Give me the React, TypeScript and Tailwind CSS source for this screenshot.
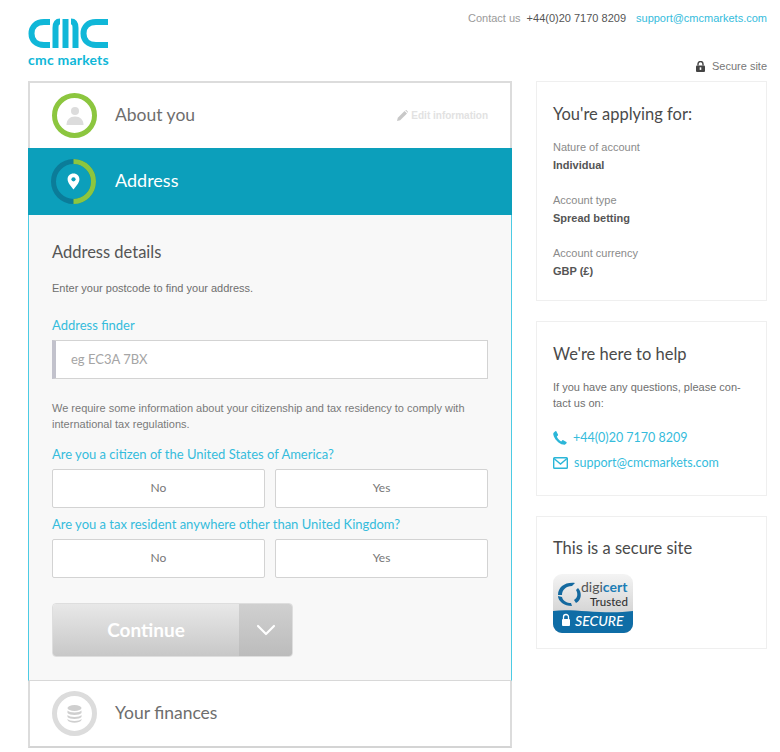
import React from 'react';
import { ChevronDown } from 'lucide-react';

const heading = "font-['Lato',sans-serif]";
const body = "font-['Liberation_Sans',Arial,sans-serif]";

const CmcLogo = () => (
  <div className="flex w-[81px] flex-col items-center">
    <svg width="81" height="31" viewBox="0 0 81 31" fill="none" stroke="#10b7d8" strokeWidth="6">
      <path d="M22 4 H16 C8 4 3.5 9 3.5 15.5 C3.5 22 8 27 16 27 H22" />
      <path d="M27.5 30 V10 C27.5 5 29 3.5 32 3.5" />
      <path d="M37.5 30 V1" />
      <path d="M47.5 30 V10 C47.5 5 46 3.5 43 3.5" />
      <path d="M80 4 H68 C60 4 55.5 9 55.5 15.5 C55.5 22 60 27 68 27 H80" />
    </svg>
    <span className={`${heading} mt-[2px] text-[14px] leading-[17px] font-bold tracking-[0.2px] whitespace-nowrap text-[#10b7d8]`}>
      cmc markets
    </span>
  </div>
);

const StepRing = ({ children, className }: { children: React.ReactNode; className: string }) => (
  <div className={`flex h-[45px] w-[45px] items-center justify-center rounded-full border-[5px] bg-white ${className}`}>
    {children}
  </div>
);

const AddressRing = () => (
  <svg width="45" height="45" viewBox="0 0 45 45" fill="none">
    <circle cx="22.5" cy="22.5" r="20" stroke="#0b7c99" strokeWidth="5" />
    <path d="M22.5 2.5 A20 20 0 0 1 22.5 42.5" stroke="#8cc63f" strokeWidth="5" />
    <path d="M22.5 14.5 C18.8 14.5 16.6 17.2 16.6 20.2 C16.6 24 20.5 27.6 22.5 30.5 C24.5 27.6 28.4 24 28.4 20.2 C28.4 17.2 26.2 14.5 22.5 14.5 Z" fill="#fff" />
    <circle cx="22.5" cy="20.3" r="2.1" fill="#0c9fbb" />
  </svg>
);

const PersonIcon = () => (
  <svg width="20" height="20" viewBox="0 0 20 20" fill="#dcdcdc">
    <circle cx="10" cy="5" r="4" />
    <path d="M1.5 19 C1.5 13.5 5 10.5 10 10.5 C15 10.5 18.5 13.5 18.5 19 Z" />
  </svg>
);

const CoinsIcon = () => (
  <svg width="15" height="18" viewBox="0 0 15 18" fill="#cfcfcf">
    <ellipse cx="7.5" cy="3" rx="7" ry="3" />
    <path d="M0.5 5.5 C2 8 13 8 14.5 5.5 V8 C13 10.5 2 10.5 0.5 8 Z" />
    <path d="M0.5 10 C2 12.5 13 12.5 14.5 10 V12 C13 14.5 2 14.5 0.5 12 Z" />
    <path d="M0.5 14 C2 16.5 13 16.5 14.5 14 V15 C13 18.5 2 18.5 0.5 15 Z" />
  </svg>
);

const PencilIcon = () => (
  <svg width="11" height="11" viewBox="0 0 11 11" fill="#c8c8c8">
    <path d="M0 11 L0.8 7.8 L7.6 1 L10 3.4 L3.2 10.2 Z" />
    <path d="M8.3 0.3 C8.7 -0.1 9.2 -0.1 9.6 0.3 L10.7 1.4 C11.1 1.8 11.1 2.3 10.7 2.7 Z" />
  </svg>
);

const PadlockIcon = () => (
  <svg width="9" height="11" viewBox="0 0 9 11">
    <path d="M2 4.5 V3 A2.5 2.5 0 0 1 7 3 V4.5" fill="none" stroke="#444" strokeWidth="1.4" />
    <rect y="4.5" width="9" height="6.5" rx="1" fill="#444" />
    <rect x="3.7" y="6.3" width="1.6" height="2.6" fill="#fff" />
  </svg>
);

const PhoneIcon = () => (
  <svg width="14" height="14" viewBox="0 0 14 14" fill="#2bb6d8">
    <path d="M3.4 0.4 L5 3.6 C5.2 4 5 4.4 4.7 4.7 L3.8 5.5 C4.6 7.4 6.2 9.3 8.2 10.4 L9.2 9.4 C9.5 9.1 9.9 9 10.3 9.2 L13.4 10.9 C13.8 11.1 13.8 11.5 13.6 11.9 C12.9 13.2 11.6 13.9 10.2 13.6 C5.5 12.6 1.2 7.8 0.3 3.4 C0 2 0.9 1 2.4 0.2 C2.8 0 3.2 0 3.4 0.4 Z" />
  </svg>
);

const EnvelopeIcon = () => (
  <svg width="15" height="12" viewBox="0 0 15 12" fill="none" stroke="#2bb6d8" strokeWidth="1.4">
    <rect x="0.7" y="0.7" width="13.6" height="10.6" rx="0.8" />
    <path d="M1 1.5 L7.5 7 L14 1.5" />
  </svg>
);

const Choice = ({ label }: { label: string }) => (
  <button className={`${heading} h-[39px] flex-1 rounded-[2px] border border-[#d3d3d3] bg-white pb-[2px] text-[12px] text-[#777]`}>{label}</button>
);

const Question = ({ text }: { text: string }) => (
  <div>
    <p className={`${heading} text-[13px] leading-[18px] text-[#35bcdc]`}>{text}</p>
    <div className="mt-[6px] flex gap-[10px]">
      <Choice label="No" />
      <Choice label="Yes" />
    </div>
  </div>
);

const Card = ({ title, className, children }: { title: string; className: string; children: React.ReactNode }) => (
  <div className={`border border-[#efefef] bg-white px-4 ${className}`}>
    <h3 className={`${heading} text-[16.5px] leading-[22px] text-[#4a4a4a]`}>{title}</h3>
    {children}
  </div>
);

const Fact = ({ label, value }: { label: string; value: string }) => (
  <div className={`${body} text-[11px] leading-[18px]`}>
    <p className="text-[#8a8a8a]">{label}</p>
    <p className="font-bold text-[#555]">{value}</p>
  </div>
);

const DigicertBadge = () => (
  <svg width="80" height="59" viewBox="0 0 80 59">
    <defs>
      <linearGradient id="badge" x1="0" y1="0" x2="0" y2="1">
        <stop offset="0" stopColor="#f4f4f4" />
        <stop offset="1" stopColor="#c4c4c4" />
      </linearGradient>
    </defs>
    <rect width="80" height="59" rx="9" fill="url(#badge)" />
    <path d="M0 37 C20 34 50 41 80 37 V50 A9 9 0 0 1 71 59 H9 A9 9 0 0 1 0 50 Z" fill="#0f6da6" />
    <path d="M5 21 C5 13 12 8 22 9 L19 12 C13 12 9 16 9 21 Z M25 14 C29 18 29 26 23 29 L21 26 C25 24 25 19 23 16 Z M19 32 C11 32 5 27 5 22 L9 23 C10 27 14 29 18 29 Z" fill="#14699f" />
    <text x="28" y="18" fontFamily="Lato, sans-serif" fontSize="14" fill="#555">digi<tspan fontWeight="700" fill="#1c7db5">cert</tspan></text>
    <text x="37" y="32" fontFamily="Lato, sans-serif" fontSize="11.5" fontWeight="500" fill="#333">Trusted</text>
    <rect x="9" y="45" width="8" height="7" rx="1" fill="#fff" />
    <path d="M10.5 45 V43 A2.5 2.5 0 0 1 15.5 43 V45" fill="none" stroke="#fff" strokeWidth="1.3" />
    <text x="22" y="52" fontFamily="Lato, sans-serif" fontSize="14" fontStyle="italic" fontWeight="500" fill="#fff">SECURE</text>
  </svg>
);

export default function App() {
  return (
    <div className={`${body} h-[752px] w-[780px] overflow-hidden bg-white`}>
      {/* Header */}
      <header className="flex h-[81px] justify-between pr-[13px] pl-[28px]">
        <div className="pt-[18px]">
          <CmcLogo />
        </div>
        <div className="flex flex-col items-end text-[11px] leading-[14px]">
          <div className="mt-[11px] flex gap-[6px]">
            <span className="text-[#9a9a9a]">Contact us</span>
            <span className="text-[#555]">+44(0)20 7170 8209</span>
            <a className="ml-[4px] text-[#35bcdc]">support@cmcmarkets.com</a>
          </div>
          <div className="mt-[34px] flex items-center gap-[7px] text-[#777]">
            <PadlockIcon />
            <span>Secure site</span>
          </div>
        </div>
      </header>

      <div className="flex items-start gap-[24px] pl-[28px]">
        {/* Application steps */}
        <main className="w-[484px] border-2 border-[#dcdcdc] border-b-[#d4d4d4] bg-white">
          <div className="-mx-[1px] flex h-[65px] items-center pr-[23px] pl-[23px]">
            <StepRing className="border-[#8cc63f]">
              <PersonIcon />
            </StepRing>
            <span className={`${heading} ml-[18px] flex-1 text-[17.5px] text-[#6e6e6e]`}>About you</span>
            <span className="flex items-center gap-[3px] text-[10px] font-bold text-[#e2e2e2]">
              <PencilIcon />
              Edit information
            </span>
          </div>
          <div className="-mx-[2px] flex h-[67px] items-center bg-[#0c9fbb] pl-[23px]">
            <AddressRing />
            <span className={`${heading} ml-[19px] pb-[2px] text-[18px] text-white`}>Address</span>
          </div>
          <section className="-mx-[2px] h-[466px] border-x border-b border-x-[#4ccbe4] border-b-[#d8d8d8] bg-[#f8f8f8] px-[23px] pt-[26px]">
            <h2 className={`${heading} text-[16.5px] leading-[22px] text-[#555]`}>Address details</h2>
            <p className="mt-[18px] text-[11px] leading-[14px] text-[#6f6f6f]">Enter your postcode to find your address.</p>
            <label className={`${heading} mt-[21px] block text-[13px] leading-[18px] text-[#35bcdc]`}>Address finder</label>
            <div className={`${heading} mt-[6px] flex h-[39px] items-center border border-l-[4px] border-[#d3d3d3] border-l-[#c2c2cc] bg-white pl-[15px] text-[13px] text-[#a5a5a5]`}>
              eg EC3A 7BX
            </div>
            <p className="mt-[21px] text-[11px] leading-[16px] text-[#7a7a7a]">
              We require some information about your citizenship and tax residency to comply with
              <br />
              international tax regulations.
            </p>
            <div className="mt-[13px] flex flex-col gap-[7px]">
              <Question text="Are you a citizen of the United States of America?" />
              <Question text="Are you a tax resident anywhere other than United Kingdom?" />
            </div>
            <div className="mt-[25px] flex h-[54px] w-[241px] overflow-hidden rounded-[4px] border border-[#dedede] text-white">
              <div className={`${heading} flex flex-1 items-center justify-center bg-gradient-to-b from-[#e8e8e8] to-[#c8c8c8] text-[19px] font-bold`}>
                Continue
              </div>
              <div className="flex w-[53px] items-center justify-center bg-gradient-to-b from-[#d0d0d0] to-[#bcbcbc]">
                <ChevronDown className="h-[32px] w-[32px]" strokeWidth={1.6} />
              </div>
            </div>
          </section>
          <div className="-mx-[1px] flex h-[65px] items-center pl-[23px]">
            <StepRing className="border-[#dcdcdc]">
              <CoinsIcon />
            </StepRing>
            <span className={`${heading} ml-[18px] text-[17.5px] text-[#6e6e6e]`}>Your finances</span>
          </div>
        </main>

        {/* Summary column */}
        <aside className="flex w-[231px] flex-col gap-[20px]">
          <Card title="You're applying for:" className="h-[220px] pt-[21px]">
            <div className="mt-[13px] flex flex-col gap-[17px]">
              <Fact label="Nature of account" value="Individual" />
              <Fact label="Account type" value="Spread betting" />
              <Fact label="Account currency" value="GBP (£)" />
            </div>
          </Card>
          <Card title="We're here to help" className="h-[175px] pt-[21px]">
            <p className="mt-[14px] text-[11px] leading-[16px] text-[#6f6f6f]">
              If you have any questions, please con-
              <br />
              tact us on:
            </p>
            <div className={`${heading} mt-[18px] flex flex-col gap-[7px] text-[12.5px] leading-[18px] text-[#35bcdc]`}>
              <div className="flex items-center gap-[6px]">
                <PhoneIcon />
                +44(0)20 7170 8209
              </div>
              <div className="flex items-center gap-[6px]">
                <EnvelopeIcon />
                support@cmcmarkets.com
              </div>
            </div>
          </Card>
          <Card title="This is a secure site" className="h-[133px] pt-[20px]">
            <div className="mt-[15px]">
              <DigicertBadge />
            </div>
          </Card>
        </aside>
      </div>
    </div>
  );
}
